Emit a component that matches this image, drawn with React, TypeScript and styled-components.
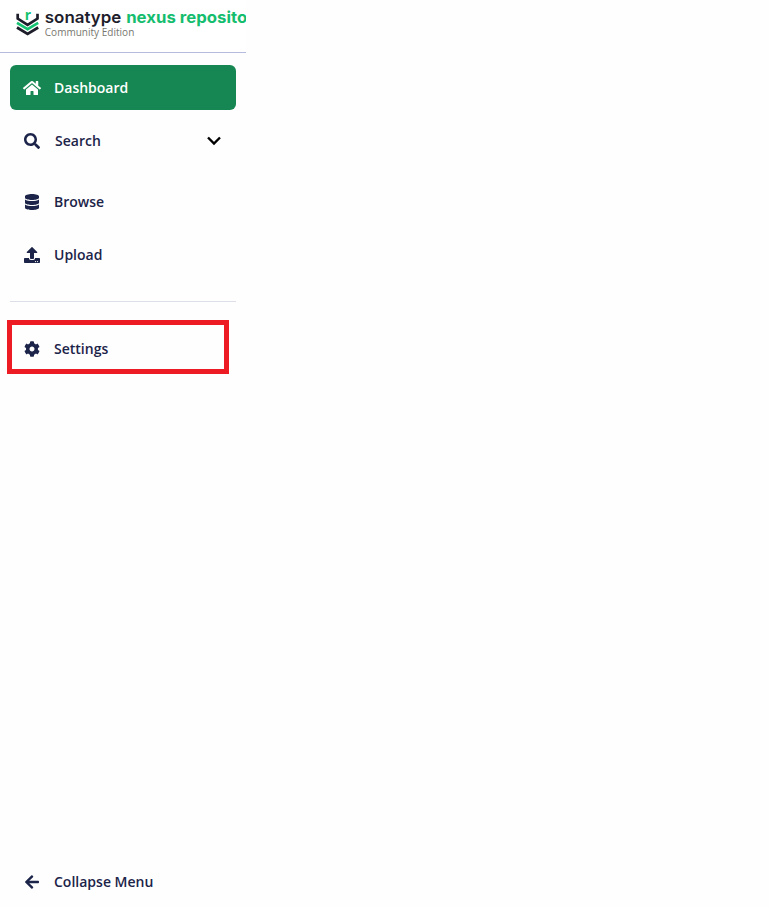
import React from 'react'
import styled, { createGlobalStyle } from 'styled-components'
import {
    FaArrowLeft,
    FaCog,
    FaDatabase,
    FaHome,
    FaSearch,
    FaUpload,
} from 'react-icons/fa'

type NavItemProps = {
    $selected?: boolean
    $marginTop?: number
}

type IconBoxProps = {
    $gap?: number
}

const GlobalStyle = createGlobalStyle`
    body {
        margin: 0;
        background: #fefefe;
        font-family: 'Open Sans', sans-serif;
    }
`

const Sidebar = styled.aside`
    display: flex;
    flex-direction: column;
    width: 246px;
    height: 907px;
    overflow: hidden;
`

const Header = styled.header`
    flex: none;
    height: 52px;
    border-bottom: 1px solid #b5bbdf;
    background: #ffffff;
    overflow: hidden;
`

const Nav = styled.nav`
    display: flex;
    flex-direction: column;
    flex: 1;
    padding: 12px 10px 3px;
`

const NavItem = styled.a<NavItemProps>`
    display: flex;
    align-items: center;
    box-sizing: border-box;
    height: 45px;
    margin-top: ${({ $marginTop }) => $marginTop ?? 0}px;
    padding: 0 14px;
    border-radius: 6px;
    background: ${({ $selected }) => ($selected ? '#168752' : 'transparent')};
    color: ${({ $selected }) => ($selected ? '#ffffff' : '#1c2449')};
    font-size: 14px;
    font-weight: 600;
    line-height: 20px;
    cursor: pointer;
`

const IconBox = styled.span<IconBoxProps>`
    display: flex;
    justify-content: center;
    width: 16px;
    margin-right: ${({ $gap }) => $gap ?? 14}px;

    svg {
        flex: none;
    }
`

const Chevron = styled.svg`
    margin-left: auto;
`

const Divider = styled.hr`
    width: 100%;
    height: 1px;
    margin: 24px 0 0;
    border: 0;
    background: #dcdfe8;
`

const Highlight = styled.div`
    box-sizing: border-box;
    width: 222px;
    height: 54px;
    margin: 18px 0 0 -3px;
    border: 5px solid #ed1c24;

    ${NavItem} {
        height: 47px;
        padding: 0 12px;
    }
`

const Footer = styled.div`
    margin-top: auto;
`

const Logo = () => (
    <svg width="246" height="48" viewBox="0 0 246 48" fill="none">
        <g strokeWidth="2.7">
            <path d="M17.7 13.800v4.800l9.900 6.200 9.900-6.200v-4.800" stroke="#1d1d2b" />
            <path d="M17 22.900l10.600 6.300 10.600-6.300" stroke="#15c271" />
            <path d="M17 27.500l10.600 6.500 10.600-6.500" stroke="#1d1d2b" />
        </g>
        <text
            x="24.7"
            y="19.8"
            fontFamily="Open Sans"
            fontSize="14"
            fontWeight="700"
            fill="#15c271"
        >
            r
        </text>
        <g fontFamily="Inter" fontSize="16.3">
            <text
                x="44.8"
                y="22.6"
                fontWeight="600"
                fill="#1d1d2b"
                textLength="76.500"
                lengthAdjust="spacingAndGlyphs"
            >
                sonatype
            </text>
            <text
                x="126.2"
                y="22.6"
                fontWeight="700"
                fill="#15bd6e"
                textLength="121"
                lengthAdjust="spacingAndGlyphs"
            >
                nexus reposito
            </text>
        </g>
        <text
            x="44.800"
            y="36.3"
            fontFamily="Open Sans"
            fontSize="10.500"
            fill="#77776f"
            textLength="89.500"
            lengthAdjust="spacingAndGlyphs"
        >
            Community Edition
        </text>
    </svg>
)

const App = () => (
    <>
        <GlobalStyle />
        <Sidebar>
            <Header>
                <Logo />
            </Header>
            <Nav>
                <NavItem $selected>
                    <IconBox>
                        <FaHome size={18} />
                    </IconBox>
                    Dashboard
                </NavItem>
                <NavItem $marginTop={8}>
                    <IconBox $gap={15}>
                        <FaSearch size={16} />
                    </IconBox>
                    Search
                    <Chevron width="16" height="12" viewBox="0 0 16 12" fill="none">
                        <path d="M2 2.500l6 6 6-6" stroke="#000000" strokeWidth="2.400" />
                    </Chevron>
                </NavItem>
                <NavItem $marginTop={16}>
                    <IconBox>
                        <FaDatabase size={16} />
                    </IconBox>
                    Browse
                </NavItem>
                <NavItem $marginTop={8}>
                    <IconBox>
                        <FaUpload size={16} />
                    </IconBox>
                    Upload
                </NavItem>
                <Divider />
                <Highlight>
                    <NavItem>
                        <IconBox>
                            <FaCog size={16} />
                        </IconBox>
                        Settings
                    </NavItem>
                </Highlight>
                <Footer>
                    <NavItem>
                        <IconBox>
                            <FaArrowLeft size={16} />
                        </IconBox>
                        Collapse Menu
                    </NavItem>
                </Footer>
            </Nav>
        </Sidebar>
    </>
)

export default App
